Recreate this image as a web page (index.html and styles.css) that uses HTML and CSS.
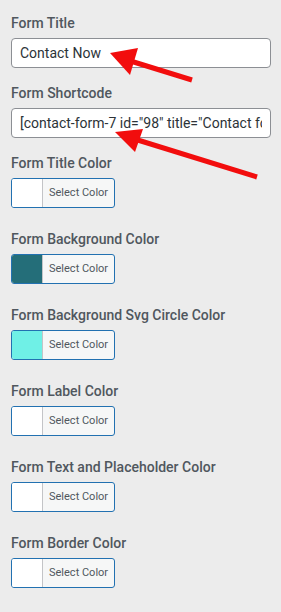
FILE: index.html
```html
<!DOCTYPE html>
<html lang="en">
	<head>
		<meta charset="UTF-8" />
		<meta name="viewport" content="width=device-width, initial-scale=1.0" />
		<title>Form Settings</title>
		<link rel="stylesheet" href="styles.css">
	</head>
	<body>
		<div class="panel">
			<div class="field">
				<label for="formTitle">Form Title</label>
				<input type="text" id="formTitle" value="Contact Now" />
			</div>
			<div class="field">
				<label for="formShortcode">Form Shortcode</label>
				<input type="text" id="formShortcode" value='[contact-form-7 id="98" title="Contact form 1"]' />
			</div>
			<div class="field color-field">
				<label>Form Title Color</label>
				<button class="color-result"><span class="swatch"></span><span class="color-text">Select Color</span></button>
			</div>
			<div class="field color-field">
				<label>Form Background Color</label>
				<button class="color-result"><span class="swatch teal"></span><span class="color-text">Select Color</span></button>
			</div>
			<div class="field color-field">
				<label>Form Background Svg Circle Color</label>
				<button class="color-result"><span class="swatch aqua"></span><span class="color-text">Select Color</span></button>
			</div>
			<div class="field color-field">
				<label>Form Label Color</label>
				<button class="color-result"><span class="swatch"></span><span class="color-text">Select Color</span></button>
			</div>
			<div class="field color-field">
				<label>Form Text and Placeholder Color</label>
				<button class="color-result"><span class="swatch"></span><span class="color-text">Select Color</span></button>
			</div>
			<div class="field color-field">
				<label>Form Border Color</label>
				<button class="color-result"><span class="swatch"></span><span class="color-text">Select Color</span></button>
			</div>
		</div>

		<svg class="arrows" width="281" height="200" viewBox="0 0 281 200">
			<line x1="192" y1="80" x2="124" y2="59" />
			<polygon points="110,53 138,48 130,75" />
			<line x1="257" y1="177" x2="128" y2="137" />
			<polygon points="115,132 143,129 135,152" />
		</svg>
	</body>
</html>
```

FILE: styles.css
```css
body {
	font-family: Roboto, "Liberation Sans", sans-serif;
	background-color: #ececec;
	color: #50575e;
	margin: 0;
	position: relative;
}
.panel {
	padding: 13px 10px 0 11px;
}
.field {
	margin-bottom: 15px;
}
.field label {
	display: block;
	font-size: 14px;
	line-height: 20px;
	font-weight: 500;
	color: #50575e;
	margin-bottom: 5px;
}
.field input {
	display: block;
	width: 260px;
	height: 30px;
	padding: 0 8px;
	border: 1px solid #8c8f94;
	border-radius: 4px;
	box-sizing: border-box;
	background-color: #fff;
	color: #2c3338;
	font-family: Roboto, "Liberation Sans", sans-serif;
	font-size: 14px;
}
.color-field {
	margin-bottom: 21px;
}
.color-result {
	display: flex;
	align-items: stretch;
	width: 104px;
	height: 30px;
	padding: 0;
	border: 1px solid #2271b1;
	border-radius: 3px;
	background-color: #f6f7f7;
	box-sizing: border-box;
	overflow: hidden;
	cursor: pointer;
}
.swatch {
	width: 30px;
	background-color: #fff;
	border-right: 1px solid #c3c4c7;
}
.swatch.teal {
	background-color: #246e79;
}
.swatch.aqua {
	background-color: #6ff0e6;
}
.color-text {
	padding-left: 6px;
	font-family: Roboto, "Liberation Sans", sans-serif;
	font-size: 11px;
	line-height: 28px;
	color: #50575e;
}
.arrows {
	position: absolute;
	top: 0;
	left: 0;
	pointer-events: none;
}
.arrows line {
	stroke: #f20d0d;
	stroke-width: 5;
}
.arrows polygon {
	fill: #f20d0d;
}
```
